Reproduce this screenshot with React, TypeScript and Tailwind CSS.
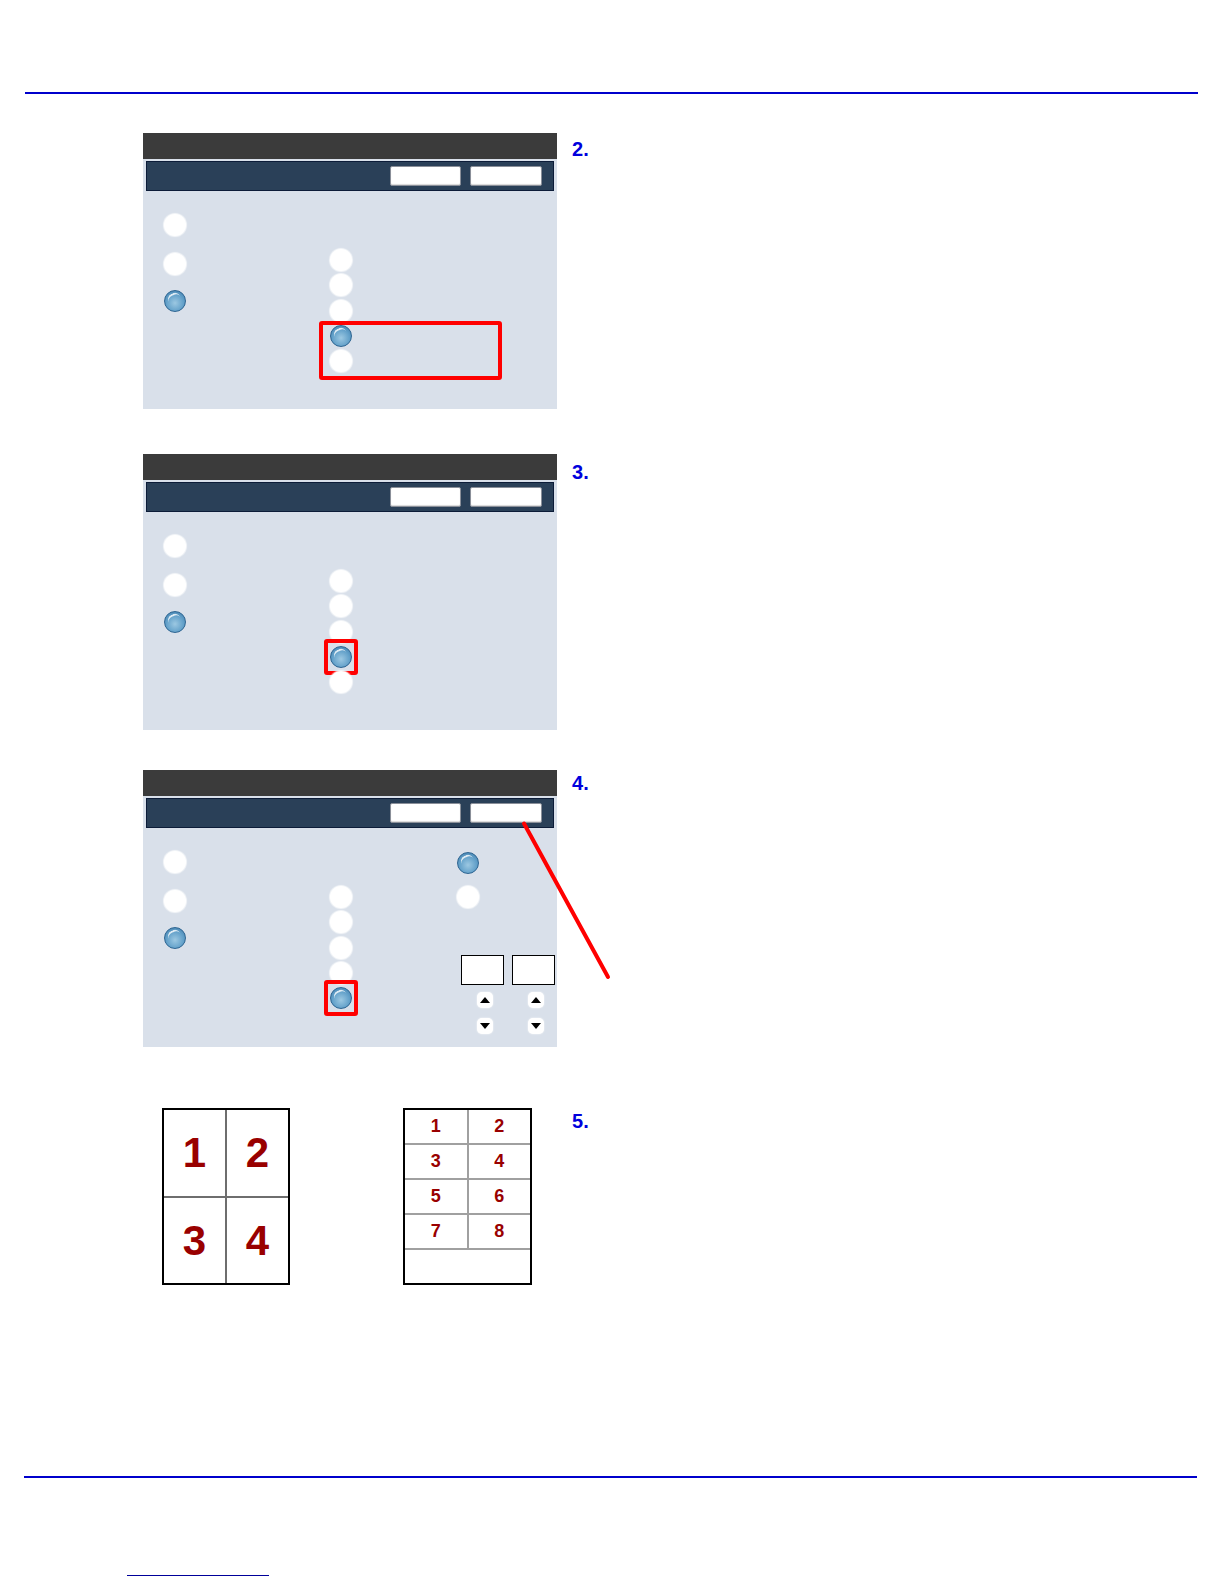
import React from 'react';

type Mark = 'wide' | 'small' | null;

const Radio: React.FC<{ on?: boolean; mark?: Mark }> = ({ on, mark }) => (
  <div className="relative w-[22px] h-[22px] shrink-0">
    {on ? (
      <div className="relative w-[22px] h-[22px] rounded-full border border-[#2d6592] bg-[radial-gradient(circle_at_50%_60%,#9cc8e2_0%,#62a0c9_55%,#3a76a4_100%)] overflow-hidden">
        <div className="absolute left-[3px] top-[2px] w-[13px] h-[12px] rounded-full border-t-[2px] border-white/80 -rotate-[25deg]" />
      </div>
    ) : (
      <div className="w-[22px] h-[22px] rounded-full bg-white shadow-[0_0_1px_1px_rgba(255,255,255,0.7)]" />
    )}
    {mark === 'wide' && (
      <div className="absolute left-[-11px] top-[-4px] w-[183px] h-[59px] border-[4px] border-[#ff0000] rounded-[3px]" />
    )}
    {mark === 'small' && (
      <div className="absolute left-[-6px] top-[-7px] w-[34px] h-[36px] border-[4px] border-[#ff0000] rounded-[3px]" />
    )}
  </div>
);

const Arrow: React.FC<{ up?: boolean }> = ({ up }) => (
  <div className="w-[16px] h-[16px] rounded-[5px] bg-white shadow-[0_0_2px_rgba(255,255,255,0.9)] flex items-center justify-center">
    {up ? (
      <div className="w-0 h-0 border-l-[5px] border-r-[5px] border-b-[6px] border-l-transparent border-r-transparent border-b-black" />
    ) : (
      <div className="w-0 h-0 border-l-[5px] border-r-[5px] border-t-[6px] border-l-transparent border-r-transparent border-t-black" />
    )}
  </div>
);

const Panel: React.FC<{ step: 2 | 3 | 4 }> = ({ step }) => {
  const middleSel = step === 4 ? 4 : 3;
  return (
    <div className={`relative w-[414px] ${step === 4 ? 'h-[277px]' : 'h-[276px]'} bg-[#d9e0ea] flex flex-col`}>
      <div className="h-[26px] bg-[#3b3b3b]" />
      <div className="mt-[2px] mx-[3px] h-[30px] bg-[#2a4058] border border-[#0c1c38] flex items-center justify-end gap-[9px] pr-[11px]">
        <div className="w-[71px] h-[20px] bg-white border border-[#8a8f99] rounded-[2px] shadow-[inset_0_-1px_1px_rgba(0,0,0,0.15)]" />
        <div className="w-[72px] h-[20px] bg-white border border-[#8a8f99] rounded-[2px] shadow-[inset_0_-1px_1px_rgba(0,0,0,0.15)]" />
      </div>
      <div className="flex-1 flex items-start">
        <div className="ml-[21px] mt-[23px] flex flex-col">
          <Radio />
          <div className="mt-[17px]">
            <Radio />
          </div>
          <div className="mt-[15px]">
            <Radio on />
          </div>
        </div>
        <div className="ml-[144px] mt-[58px] flex flex-col gap-[3.25px]">
          {[0, 1, 2, 3, 4].map((i) => (
            <Radio
              key={i}
              on={i === middleSel}
              mark={i === middleSel ? (step === 2 ? 'wide' : 'small') : null}
            />
          ))}
        </div>
        {step === 4 && (
          <div className="ml-[105px] mt-[24px] flex flex-col">
            <Radio on />
            <div className="mt-[12px]">
              <Radio />
            </div>
            <div className="mt-[47px] ml-[4px] flex gap-[8px]">
              {[0, 1].map((i) => (
                <div key={i} className="flex flex-col">
                  <div className="w-[43px] h-[30px] bg-white border border-black" />
                  <div className="mt-[7px] ml-[16px]">
                    <Arrow up />
                  </div>
                  <div className="mt-[10px] ml-[16px]">
                    <Arrow />
                  </div>
                </div>
              ))}
            </div>
          </div>
        )}
      </div>
      {step === 4 && (
        <svg className="absolute left-[374px] top-[46px]" width="100" height="170" viewBox="0 0 100 170">
          <line x1="7" y1="7.5" x2="91" y2="161" stroke="#ff0000" strokeWidth="4" strokeLinecap="round" />
        </svg>
      )}
    </div>
  );
};

const StepLabel: React.FC<{ n: number; top: string }> = ({ n, top }) => (
  <div className={`${top} text-[20px] leading-[20px] font-bold text-[#0000dd]`}>{n}.</div>
);

export default function App() {
  return (
    <div
      className="w-full h-[1584px] overflow-hidden bg-white flex flex-col"
      style={{ fontFamily: '"Liberation Sans", Arial, sans-serif' }}
    >
      <div className="mt-[92px] ml-[25px] w-[1173px] h-[2px] bg-[#0000cc]" />

      <div className="mt-[39px] flex items-start">
        <div className="ml-[143px]">
          <Panel step={2} />
        </div>
        <div className="ml-[15px]">
          <StepLabel n={2} top="mt-[6px]" />
        </div>
      </div>

      <div className="mt-[45px] flex items-start">
        <div className="ml-[143px]">
          <Panel step={3} />
        </div>
        <div className="ml-[15px]">
          <StepLabel n={3} top="mt-[8px]" />
        </div>
      </div>

      <div className="mt-[40px] flex items-start">
        <div className="ml-[143px]">
          <Panel step={4} />
        </div>
        <div className="ml-[15px]">
          <StepLabel n={4} top="mt-[3px]" />
        </div>
      </div>

      <div className="mt-[61px] flex items-start">
        <div className="ml-[162px] w-[128px] h-[177px] border-2 border-black bg-[#6e6e6e] grid grid-cols-2 grid-rows-2 gap-[2px]">
          {['1', '2', '3', '4'].map((d) => (
            <div key={d} className="bg-white flex items-center justify-center text-[42px] font-bold text-[#990000]">
              {d}
            </div>
          ))}
        </div>
        <div className="ml-[113px] w-[129px] h-[177px] border-2 border-black bg-white flex flex-col">
          <div className="grid grid-cols-2 grid-rows-[repeat(4,33px)] gap-[2px] bg-[#a0a0a0] pb-[2px]">
            {['1', '2', '3', '4', '5', '6', '7', '8'].map((d) => (
              <div key={d} className="bg-white flex items-center justify-center text-[18px] font-bold text-[#990000]">
                {d}
              </div>
            ))}
          </div>
        </div>
        <div className="ml-[40px]">
          <StepLabel n={5} top="mt-[3px]" />
        </div>
      </div>

      <div className="mt-[191px] ml-[24px] w-[1173px] h-[2px] bg-[#0000cc]" />

      <div className="mt-[97px] ml-[127px] w-[142px] h-[1px] bg-[#00009a]" />
    </div>
  );
}
